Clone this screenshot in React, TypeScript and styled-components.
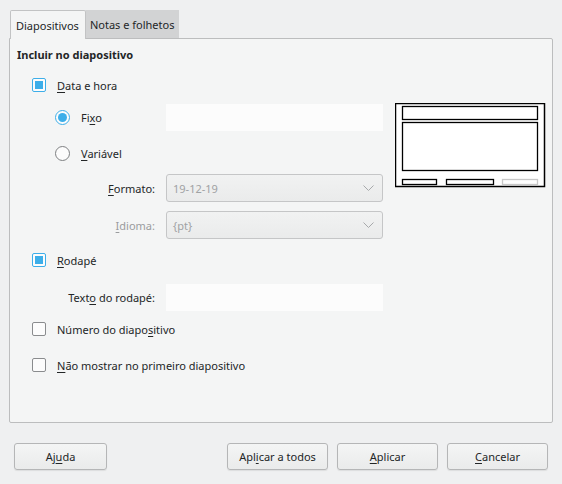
import React from 'react'
import styled, { createGlobalStyle } from 'styled-components'

const Global = createGlobalStyle`
  html, body {
    margin: 0;
    padding: 0;
    background: #eff0f1;
  }
  body {
    font-family: "Noto Sans", "Open Sans", sans-serif;
    font-size: 11px;
    color: #232627;
  }
`

const Window = styled.div`
  width: 562px;
  height: 484px;
  box-sizing: border-box;
  padding: 10px 9px 0 9px;
  display: flex;
  flex-direction: column;
`

const TabBar = styled.div`
  display: flex;
  padding-left: 1px;
  height: 28px;
  position: relative;
  z-index: 1;
`

const Tab = styled.div<{ $active?: boolean }>`
  box-sizing: border-box;
  height: ${p => (p.$active ? '29px' : '28px')};
  padding: 0 ${p => (p.$active ? '6px 0 5px' : '5px 0 4px')};
  display: flex;
  align-items: center;
  background: ${p => (p.$active ? '#f4f5f5' : '#d2d3d4')};
  border: ${p => (p.$active ? '1px solid #c2c3c4' : 'none')};
  border-bottom: none;
  border-radius: ${p => (p.$active ? '2px 2px 0 0' : '0')};
  color: #232627;
`

const Panel = styled.div`
  box-sizing: border-box;
  height: 385px;
  background: #f4f5f5;
  border: 1px solid #bcbdbe;
  border-radius: 0 2px 2px 2px;
  display: flex;
  flex-direction: column;
`

const Row = styled.div<{ $h: number; $indent?: number }>`
  height: ${p => p.$h}px;
  display: flex;
  align-items: center;
  padding-left: ${p => p.$indent ?? 0}px;
  flex-shrink: 0;
`

const Title = styled.div`
  font-weight: bold;
  padding-left: 7px;
`

const DateSection = styled.div`
  display: flex;
`

const DateRows = styled.div`
  display: flex;
  flex-direction: column;
  width: 374px;
`

const PreviewWrap = styled.div`
  padding-top: 33px;
  padding-left: 11px;
`

const Box = styled.span<{ $checked?: boolean }>`
  box-sizing: border-box;
  width: 14px;
  height: 14px;
  border: 1px solid ${p => (p.$checked ? '#3daee9' : '#8a8c8e')};
  border-radius: 2px;
  background: #fcfcfc;
  display: flex;
  align-items: center;
  justify-content: center;
  margin-right: 11px;
  flex-shrink: 0;
  &::after {
    content: '';
    width: 8px;
    height: 8px;
    background: ${p => (p.$checked ? '#3daee9' : 'transparent')};
  }
`

const Radio = styled.span<{ $checked?: boolean }>`
  box-sizing: border-box;
  width: 15px;
  height: 15px;
  border: 1px solid ${p => (p.$checked ? '#3daee9' : '#7e8082')};
  border-radius: 50%;
  background: #fcfcfc;
  display: flex;
  align-items: center;
  justify-content: center;
  margin-right: 11px;
  flex-shrink: 0;
  &::after {
    content: '';
    width: 9px;
    height: 9px;
    border-radius: 50%;
    background: ${p => (p.$checked ? '#3daee9' : 'transparent')};
  }
`

const Label = styled.span<{ $disabled?: boolean }>`
  color: ${p => (p.$disabled ? '#9a9c9e' : '#232627')};
  white-space: nowrap;
`

const RadioLabel = styled(Label)`
  width: 85px;
  flex-shrink: 0;
`

const FieldLabel = styled(Label)`
  width: 145px;
  text-align: right;
  padding-right: 11px;
  flex-shrink: 0;
`

const TextField = styled.div`
  width: 217px;
  height: 27px;
  background: #fcfcfc;
`

const Combo = styled.div`
  box-sizing: border-box;
  width: 217px;
  height: 28px;
  border: 1px solid #c5c6c7;
  border-radius: 3px;
  background: linear-gradient(#f1f2f2, #eaebeb);
  display: flex;
  align-items: center;
  justify-content: space-between;
  padding: 0 8px 0 6px;
  color: #a0a2a4;
`

const Footer = styled.div`
  display: flex;
  padding: 20px 5px 0 5px;
  gap: 9px;
`

const Spacer = styled.div`
  flex: 1;
`

const Button = styled.div<{ $w?: number }>`
  box-sizing: border-box;
  width: ${p => p.$w ?? 101}px;
  height: 27px;
  border: 1px solid #b5b6b7;
  border-radius: 3px;
  background: linear-gradient(#f4f5f5, #eaebeb);
  box-shadow: 0 1px 1px rgba(0, 0, 0, 0.08);
  display: flex;
  align-items: center;
  justify-content: center;
  color: #232627;
`

const U = styled.span`
  text-decoration: underline;
  text-underline-offset: 2px;
`

const Chevron = () => (
  <svg width="11" height="7" viewBox="0 0 11 7">
    <path d="M0.5 0.5 L5.5 5.5 L10.5 0.5" fill="none" stroke="#a7a9ab" strokeWidth="1" />
  </svg>
)

const Preview = () => (
  <svg width="151" height="85" viewBox="0 0 151 85">
    <rect x="0.5" y="0.5" width="149" height="83" fill="#ffffff" stroke="#000" strokeWidth="1.5" />
    <rect x="7.5" y="3.5" width="135" height="13" fill="none" stroke="#000" strokeWidth="1.3" />
    <rect x="7.5" y="19.5" width="135" height="48" fill="none" stroke="#000" strokeWidth="1.3" />
    <rect x="7.5" y="76.5" width="34" height="5" fill="none" stroke="#000" strokeWidth="1.3" />
    <rect x="51.5" y="76.5" width="47" height="5" fill="none" stroke="#000" strokeWidth="1.3" />
    <rect x="107.5" y="76.5" width="35" height="5" fill="none" stroke="#c8c8c8" strokeWidth="1.3" />
  </svg>
)

export default function App() {
  return (
    <>
      <Global />
      <Window>
        <TabBar>
          <Tab $active>Diapositivos</Tab>
          <Tab>Notas e folhetos</Tab>
        </TabBar>
        <Panel>
          <Row $h={31}>
            <Title>Incluir no diapositivo</Title>
          </Row>
          <DateSection>
            <DateRows>
              <Row $h={30} $indent={22}>
                <Box $checked />
                <Label><U>D</U>ata e hora</Label>
              </Row>
              <Row $h={34} $indent={45}>
                <Radio $checked />
                <RadioLabel>Fi<U>x</U>o</RadioLabel>
                <TextField />
              </Row>
              <Row $h={38} $indent={45}>
                <Radio />
                <Label><U>V</U>ariável</Label>
              </Row>
              <Row $h={32}>
                <FieldLabel><U>F</U>ormato:</FieldLabel>
                <Combo>
                  <span>19-12-19</span>
                  <Chevron />
                </Combo>
              </Row>
              <Row $h={42}>
                <FieldLabel $disabled><U>I</U>dioma:</FieldLabel>
                <Combo>
                  <span>{'{pt}'}</span>
                  <Chevron />
                </Combo>
              </Row>
            </DateRows>
            <PreviewWrap>
              <Preview />
            </PreviewWrap>
          </DateSection>
          <Row $h={28} $indent={22}>
            <Box $checked />
            <Label><U>R</U>odapé</Label>
          </Row>
          <Row $h={46}>
            <FieldLabel>Text<U>o</U> do rodapé:</FieldLabel>
            <TextField />
          </Row>
          <Row $h={18} $indent={22}>
            <Box />
            <Label>Número do diapo<U>s</U>itivo</Label>
          </Row>
          <Row $h={54} $indent={22}>
            <Box />
            <Label><U>N</U>ão mostrar no primeiro diapositivo</Label>
          </Row>
        </Panel>
        <Footer>
          <Button $w={93}>Aj<U>u</U>da</Button>
          <Spacer />
          <Button>Apl<U>i</U>car a todos</Button>
          <Button><U>A</U>plicar</Button>
          <Button><U>C</U>ancelar</Button>
        </Footer>
      </Window>
    </>
  )
}
